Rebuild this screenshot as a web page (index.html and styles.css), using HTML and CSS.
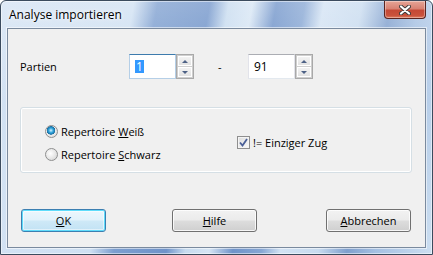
FILE: index.html
```html
<!DOCTYPE html>
<html lang="de">
<head>
  <meta charset="UTF-8" />
  <title>Analyse importieren</title>
  <link rel="stylesheet" href="styles.css">
</head>
<body>
  <div class="window">
    <!-- Titelleiste -->
    <div class="titlebar">
      <span class="title">Analyse importieren</span>
      <button class="close-btn">
        <svg width="12" height="10" viewBox="0 0 12 10">
          <path d="M2 1.5 L10 8.5 M10 1.5 L2 8.5" stroke="#3a3a3a" stroke-width="4" stroke-linecap="round" />
          <path d="M2 1.5 L10 8.5 M10 1.5 L2 8.5" stroke="#fff" stroke-width="2.2" stroke-linecap="round" />
        </svg>
      </button>
    </div>

    <div class="client">
      <!-- Bereich der Partien -->
      <div class="range-row">
        <span class="range-label">Partien</span>
        <div class="spin">
          <div class="spin-input focused"><span class="selected">1</span></div>
          <div class="spin-buttons">
            <span class="spin-btn"><span class="arrow-up"></span></span>
            <span class="spin-btn"><span class="arrow-down"></span></span>
          </div>
        </div>
        <span class="dash">-</span>
        <div class="spin">
          <div class="spin-input">91</div>
          <div class="spin-buttons">
            <span class="spin-btn"><span class="arrow-up"></span></span>
            <span class="spin-btn"><span class="arrow-down"></span></span>
          </div>
        </div>
      </div>

      <!-- Optionen -->
      <div class="group">
        <div class="radios">
          <label class="radio checked"><span class="radio-dot"></span><span>Repertoire <u>W</u>eiß</span></label>
          <label class="radio"><span class="radio-dot"></span><span>Repertoire <u>S</u>chwarz</span></label>
        </div>
        <label class="check">
          <span class="check-box">
            <svg width="9" height="9" viewBox="0 0 9 9">
              <path d="M1 4.5 L3.5 7.5 L8 1" fill="none" stroke="#4a5f97" stroke-width="1.8" />
            </svg>
          </span><span>!= Einziger Zug</span>
        </label>
      </div>

      <!-- Schaltflächen -->
      <div class="buttons">
        <button class="btn btn-default"><u>O</u>K</button>
        <button class="btn btn-help"><u>H</u>ilfe</button>
        <button class="btn btn-cancel"><u>A</u>bbrechen</button>
      </div>
    </div>
  </div>
</body>
</html>
```

FILE: styles.css
```css
body {
  margin: 0;
  padding: 0;
  width: 433px;
  height: 255px;
  overflow: hidden;
  font-family: 'Segoe UI', 'Open Sans', sans-serif;
  font-size: 11px;
  color: #000;
  background-color: #fff;
}

.window {
  box-sizing: border-box;
  width: 433px;
  height: 255px;
  border: 1px solid #3b4b5e;
  border-radius: 6px 6px 0 0;
  display: flex;
  flex-direction: column;
  background:
    linear-gradient(180deg, rgba(255, 255, 255, 0.25), rgba(255, 255, 255, 0) 40%),
    linear-gradient(100deg,
      #d3e2f3 0%, #cfe0f2 28%, #7c9ecf 33%, #6f93c9 44%,
      #c7dbef 48%, #d6e5f4 53%, #6f93c9 58%, #86a6d3 64%,
      #d2e2f3 68%, #c8dbef 76%, #7f9fcd 82%, #a5c0e2 88%, #cddff1 100%);
  box-shadow: inset 0 0 0 1px rgba(255, 255, 255, 0.5);
}

/* Titelleiste */
.titlebar {
  height: 27px;
  display: flex;
  justify-content: space-between;
  align-items: flex-start;
  padding-left: 8px;
}

.title {
  margin-top: 5px;
  font-size: 12px;
  text-shadow: 0 0 6px rgba(255, 255, 255, 0.9), 0 0 3px rgba(255, 255, 255, 0.9);
}

.close-btn {
  width: 42px;
  height: 18px;
  margin-right: 6px;
  padding: 0;
  border: 1px solid #5a2420;
  border-top: none;
  border-radius: 0 0 4px 4px;
  display: flex;
  align-items: center;
  justify-content: center;
  background: linear-gradient(180deg, #e6a597 0%, #d88273 45%, #c54936 55%, #c9523c 85%, #e07f62 100%);
  box-shadow: inset 0 0 0 1px rgba(255, 255, 255, 0.35);
}

/* Innenbereich */
.client {
  flex: 1;
  margin: 0 6px 6px;
  border: 1px solid #7a8a9e;
  background-color: #f0f0f0;
  padding: 25px 13px 0 12px;
  box-shadow: 0 0 0 1px rgba(255, 255, 255, 0.55);
}

.range-row {
  height: 25px;
  display: flex;
  align-items: center;
}

.range-label {
  width: 109px;
}

.dash {
  width: 54px;
  padding-left: 24px;
  box-sizing: border-box;
}

.spin {
  display: flex;
  height: 25px;
}

.spin-input {
  box-sizing: border-box;
  width: 47px;
  height: 25px;
  padding: 3px 0 0 5px;
  background-color: #fff;
  border: 1px solid #abadb3;
  border-color: #abadb3 #e2e3ea #e3e9ef #e2e3ea;
  font-size: 12px;
  line-height: 17px;
}

.spin-input.focused {
  border-color: #3d7bad #b5cfe7 #b5cfe7 #b5cfe7;
}

.selected {
  display: inline-block;
  background-color: #3399ff;
  color: #fff;
  padding: 0 1px;
  line-height: 13px;
}

.spin-buttons {
  box-sizing: border-box;
  width: 18px;
  height: 25px;
  border: 1px solid #a9a9a9;
  display: flex;
  flex-direction: column;
  gap: 1px;
  padding: 1px;
  background-color: #cfcfcf;
}

.spin-btn {
  flex: 1;
  display: flex;
  align-items: center;
  justify-content: center;
  border: 1px solid #fff;
  background: linear-gradient(180deg, #f3f3f3, #e2e2e2);
}

.arrow-up {
  border-left: 3px solid transparent;
  border-right: 3px solid transparent;
  border-bottom: 3px solid #4d6185;
}

.arrow-down {
  border-left: 3px solid transparent;
  border-right: 3px solid transparent;
  border-top: 3px solid #4d6185;
}

/* Gruppenrahmen */
.group {
  box-sizing: border-box;
  height: 66px;
  margin-top: 28px;
  border: 1px solid #d5dfe5;
  border-radius: 3px;
  box-shadow: inset 0 0 0 1px #fff;
  display: flex;
  align-items: center;
  padding-left: 24px;
}

.radios {
  width: 192px;
  display: flex;
  flex-direction: column;
  gap: 8px;
  margin-top: 5px;
}

.radio,
.check {
  display: flex;
  align-items: center;
  height: 15px;
}

.radio-dot {
  box-sizing: border-box;
  width: 13px;
  height: 13px;
  margin-right: 3px;
  border-radius: 50%;
  border: 1px solid #8e8f8f;
  background: radial-gradient(circle at 40% 40%, #fff 0%, #e8e8e8 50%, #cfcfcf 100%);
}

.radio.checked .radio-dot {
  background:
    radial-gradient(circle at 45% 40%, #d8f2ff 0%, #33a7dd 25%, #186ea3 45%, transparent 50%),
    radial-gradient(circle at 40% 40%, #fff 0%, #e8e8e8 60%, #cfcfcf 100%);
}

.check {
  margin-top: 4px;
}

.check-box {
  box-sizing: border-box;
  width: 13px;
  height: 13px;
  margin-right: 3px;
  border: 1px solid #8f8f8f;
  display: flex;
  align-items: center;
  justify-content: center;
  background: linear-gradient(135deg, #dcdcdc, #fbfbfb);
  box-shadow: inset 0 0 0 1px #f4f4f4;
}

/* Schaltflächen */
.buttons {
  margin-top: 36px;
  display: flex;
  padding-left: 1px;
}

.btn {
  box-sizing: border-box;
  width: 85px;
  height: 23px;
  padding: 0;
  font-family: inherit;
  font-size: 11px;
  color: #000;
  border: 1px solid #707070;
  border-radius: 3px;
  background: linear-gradient(180deg, #f2f2f2 0%, #ebebeb 48%, #dddddd 52%, #cfcfcf 100%);
  box-shadow: inset 0 0 0 1px rgba(255, 255, 255, 0.8);
}

.btn-help {
  margin-left: 66px;
}

.btn-cancel {
  margin-left: 69px;
}

.btn-default {
  border-color: #3c7fb1;
  background: linear-gradient(180deg, #ecf7fd 0%, #e1f2fb 48%, #cfe9f7 52%, #c1e2f4 100%);
  box-shadow: inset 0 0 0 1px #5fdcfb, inset 0 0 0 2px rgba(255, 255, 255, 0.5);
}
```
